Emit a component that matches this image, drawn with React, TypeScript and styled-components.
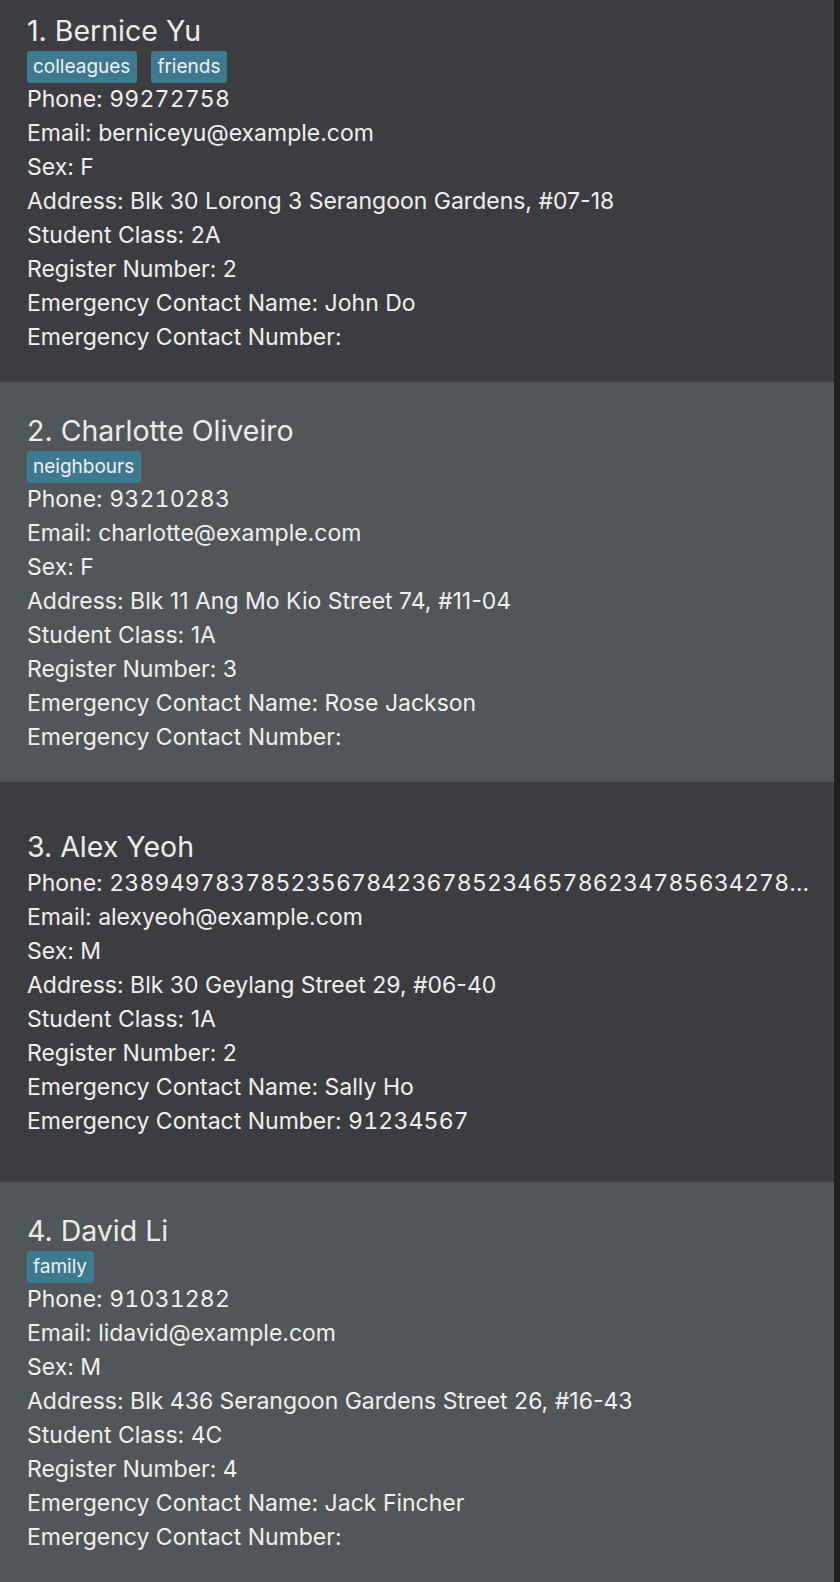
import React from "react";
import styled, { createGlobalStyle } from "styled-components";

type Person = {
  name: string;
  tags: string[];
  phone: string;
  email: string;
  sex: string;
  address: string;
  studentClass: string;
  register: string;
  ecName: string;
  ecNumber: string;
};

const people: Person[] = [
  {
    name: "Bernice Yu",
    tags: ["colleagues", "friends"],
    phone: "99272758",
    email: "berniceyu@example.com",
    sex: "F",
    address: "Blk 30 Lorong 3 Serangoon Gardens, #07-18",
    studentClass: "2A",
    register: "2",
    ecName: "John Do",
    ecNumber: "",
  },
  {
    name: "Charlotte Oliveiro",
    tags: ["neighbours"],
    phone: "93210283",
    email: "charlotte@example.com",
    sex: "F",
    address: "Blk 11 Ang Mo Kio Street 74, #11-04",
    studentClass: "1A",
    register: "3",
    ecName: "Rose Jackson",
    ecNumber: "",
  },
  {
    name: "Alex Yeoh",
    tags: [],
    phone: "238949783785235678423678523465786234785634278956234789562347856",
    email: "alexyeoh@example.com",
    sex: "M",
    address: "Blk 30 Geylang Street 29, #06-40",
    studentClass: "1A",
    register: "2",
    ecName: "Sally Ho",
    ecNumber: "91234567",
  },
  {
    name: "David Li",
    tags: ["family"],
    phone: "91031282",
    email: "lidavid@example.com",
    sex: "M",
    address: "Blk 436 Serangoon Gardens Street 26, #16-43",
    studentClass: "4C",
    register: "4",
    ecName: "Jack Fincher",
    ecNumber: "",
  },
];

const App: React.FC = () => {
  return (
    <>
      <GlobalStyle />
      <Viewport>
        <List>
          {people.map((p, i) => (
            <Card key={p.name} odd={i % 2 === 1}>
              <Title>
                {i + 1}. {p.name}
              </Title>
              {p.tags.length > 0 && (
                <Tags>
                  {p.tags.map((t) => (
                    <Tag key={t}>{t}</Tag>
                  ))}
                </Tags>
              )}
              <Line>
                Phone: <Digits>{p.phone}</Digits>
              </Line>
              <Line>Email: {p.email}</Line>
              <Line>Sex: {p.sex}</Line>
              <Line>Address: {p.address}</Line>
              <Line>Student Class: {p.studentClass}</Line>
              <Line>Register Number: {p.register}</Line>
              <Line>Emergency Contact Name: {p.ecName}</Line>
              <Line>
                Emergency Contact Number: <Digits>{p.ecNumber}</Digits>
              </Line>
            </Card>
          ))}
        </List>
        <Scrollbar />
      </Viewport>
    </>
  );
};

export default App;

const GlobalStyle = createGlobalStyle`
  html, body {
    margin: 0;
    padding: 0;
    background: #1f1f1f;
    overflow: hidden;
  }
  body {
    font-family: Inter, "Noto Sans", sans-serif;
  }
`;

const Viewport = styled.div`
  display: flex;
  width: 840px;
  height: 1582px;
  overflow: hidden;
`;

const List = styled.div`
  flex: 1;
  min-width: 0;
  display: flex;
  flex-direction: column;
  margin-top: -18px;
`;

const Scrollbar = styled.div`
  width: 6px;
  background: #1f1f1f;
`;

const Card = styled.div<{ odd: boolean }>`
  min-height: 400px;
  box-sizing: border-box;
  padding: 0 22px 0 27px;
  display: flex;
  flex-direction: column;
  justify-content: center;
  background: ${(p) => (p.odd ? "#515658" : "#3c3d40")};
`;

const Title = styled.div`
  font-size: 28.5px;
  line-height: 38px;
  color: #ececec;
  margin-top: 1px;
`;

const Tags = styled.div`
  display: flex;
  gap: 14px;
  height: 32px;
  margin: 1px 0 -1px;
`;

const Tag = styled.span`
  background: #3e7a8f;
  color: #f0f0f0;
  font-size: 19px;
  line-height: 32px;
  padding: 0 7px 0 6px;
  border-radius: 3px;
`;

const Line = styled.div`
  font-size: 23px;
  line-height: 34px;
  color: #f0f0f0;
  white-space: nowrap;
  overflow: hidden;
  text-overflow: ellipsis;
`;

const Digits = styled.span`
  font-variant-numeric: tabular-nums;
  letter-spacing: 0.2px;
`;
